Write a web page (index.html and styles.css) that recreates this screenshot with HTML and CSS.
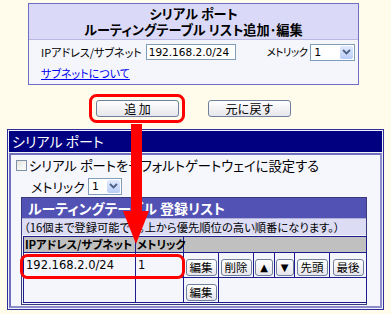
FILE: index.html
```html
<!DOCTYPE html>
<html lang="ja">
<head>
<meta charset="utf-8">
<link rel="stylesheet" href="styles.css">
</head>
<body>
<div class="page">
  <div class="topbox">
    <div class="tophead"><div class="tl">シリアル ポート</div><div class="tl">ルーティングテーブル リスト追加･編集</div></div>
    <div class="topbody">
      <div class="row">
        <span class="lbl">IPアドレス/サブネット</span>
        <span class="input">192.168.2.0/24</span>
        <span class="lbl metric">メトリック</span>
        <span class="sel"><span class="val">1</span><span class="arr"><svg width="9" height="6" viewBox="0 0 9 6"><path d="M1 1 L4.5 4.5 L8 1" fill="none" stroke="#4d6185" stroke-width="1.8"/></svg></span></span>
      </div>
      <a class="link" href="#">サブネットについて</a>
    </div>
  </div>

  <div class="actions">
    <button class="btn">追 加</button>
    <button class="btn">元に戻す</button>
  </div>

  <div class="panel">
    <div class="panel-head">シリアル ポート</div>
    <div class="panel-body">
      <div class="chk"><span class="box"></span>シリアル ポートをデフォルトゲートウェイに設定する</div>
      <div class="metric-row">
        <span class="mlabel">メトリック</span>
        <span class="sel sel-b"><span class="val">1</span><span class="arr"><svg width="9" height="6" viewBox="0 0 9 6"><path d="M1 1 L4.5 4.5 L8 1" fill="none" stroke="#4d6185" stroke-width="1.8"/></svg></span></span>
      </div>
      <div class="listbox">
        <div class="list-title">ルーティングテーブル 登録リスト</div>
        <div class="list-note">（16個まで登録可能です。上から優先順位の高い順番になります。）</div>
        <table class="list">
          <colgroup>
            <col class="c-ip"><col class="c-met"><col class="c-b1"><col class="c-b2"><col class="c-b3"><col class="c-b4"><col class="c-b5"><col class="c-b6">
          </colgroup>
          <tr class="hdr">
            <th>IPアドレス/サブネット</th>
            <th>メトリック</th>
            <th colspan="6"></th>
          </tr>
          <tr class="r1">
            <td class="ip">192.168.2.0/24</td>
            <td class="met">1</td>
            <td><span class="sbtn">編集</span></td>
            <td><span class="sbtn">削除</span></td>
            <td><span class="sbtn tri">▲</span></td>
            <td><span class="sbtn tri">▼</span></td>
            <td><span class="sbtn">先頭</span></td>
            <td><span class="sbtn">最後</span></td>
          </tr>
          <tr class="r2">
            <td></td>
            <td></td>
            <td><span class="sbtn">編集</span></td>
            <td colspan="5"></td>
          </tr>
        </table>
      </div>
    </div>
  </div>

  <svg class="overlay" width="391" height="314" viewBox="0 0 391 314">
    <rect x="90.5" y="95.5" width="93" height="26" rx="6" ry="6" fill="none" stroke="#ff0000" stroke-width="3"/>
    <rect x="21.5" y="255.5" width="162" height="22" rx="6" ry="6" fill="none" stroke="#ff0000" stroke-width="3"/>
    <rect x="131" y="124" width="11" height="90" fill="#ff0000"/>
    <polygon points="123,211 149,211 136,244" fill="#ff0000"/>
  </svg>
</div>
</body>
</html>
```

FILE: styles.css
```css
html, body {
  margin: 0;
  padding: 0;
}
body {
  background: #fffcec;
  font-family: "Noto Sans CJK JP", "Noto Sans", sans-serif;
  font-feature-settings: "palt";
  color: #000;
}
.page {
  position: relative;
  width: 391px;
  height: 314px;
  overflow: hidden;
  padding-top: 3px;
  box-sizing: border-box;
}

/* top box */
.topbox {
  margin-left: 28px;
  width: 331px;
  border: 1px solid #6e6ec6;
  box-sizing: border-box;
}
.tophead {
  background: #dadaf8;
  height: 36px;
  box-sizing: border-box;
  padding-top: 2px;
  text-align: center;
  font-weight: bold;
  font-size: 13.2px;
  border-bottom: 1px solid #b8b8e0;
}
.tl {
  height: 16px;
  line-height: 16px;
}
.topbody {
  background: #f5f5fc;
  height: 44px;
  box-sizing: border-box;
  padding: 3px 0 0 12px;
  font-size: 11px;
}
.row {
  display: flex;
  align-items: center;
  height: 18px;
  white-space: nowrap;
}
.lbl {
  line-height: 16px;
  flex-shrink: 0;
  white-space: nowrap;
}
.input {
  flex-shrink: 0;
  margin-left: 4px;
  width: 90px;
  height: 16px;
  box-sizing: border-box;
  border: 1px solid #7f9db9;
  background: #fff;
  font-family: "DejaVu Sans", sans-serif;
  font-size: 10.5px;
  line-height: 14px;
  padding-left: 2px;
}
.metric {
  margin-left: 31px;
  font-size: 10.5px;
  letter-spacing: -0.6px;
}
.sel {
  display: inline-flex;
  flex-shrink: 0;
  margin-left: 3px;
  width: 45px;
  height: 17px;
  box-sizing: border-box;
  border: 1px solid #7f9db9;
  background: #fff;
}
.sel .val {
  flex: 1;
  font-family: "DejaVu Sans", sans-serif;
  font-size: 11px;
  line-height: 15px;
  padding-left: 3px;
}
.sel .arr {
  width: 13px;
  margin: 1px;
  border-radius: 2px;
  background: linear-gradient(#e2eafe, #b9cdf7);
  display: flex;
  align-items: center;
  justify-content: center;
}
.link {
  display: block;
  margin-top: 4px;
  color: #0000ee;
  text-decoration: underline;
  line-height: 16px;
  width: max-content;
}

/* buttons */
.actions {
  display: flex;
  gap: 29px;
  margin: 15px 0 0 96px;
}
.btn {
  width: 83px;
  height: 17px;
  padding: 0;
  border: 1px solid #6f7f9c;
  border-radius: 3px;
  background: linear-gradient(#ffffff, #e6e6ec);
  font-family: "Noto Sans CJK JP", sans-serif;
  font-size: 12px;
  line-height: 14px;
  color: #000;
}

/* panel */
.panel {
  margin: 12px 0 0 7px;
  width: 377px;
  box-sizing: border-box;
  border: 1px solid #2e2e9a;
  padding: 1px;
  background: #f0f0fa;
}
.panel-head {
  background: #000080;
  color: #fff;
  height: 21px;
  font-size: 14px;
  line-height: 21px;
  padding-left: 3px;
}
.panel-body {
  margin-top: 1px;
  border: 2px solid #8d8dcc;
  border-top-color: #7070bc;
  border-left-color: #7070bc;
  background: #f6f6fd;
  padding: 0 0 1px 3px;
}
.chk {
  display: flex;
  align-items: center;
  height: 20px;
  padding-left: 2px;
  font-size: 13.3px;
}
.box {
  width: 11px;
  height: 11px;
  box-sizing: border-box;
  border: 1px solid #8090a8;
  background: linear-gradient(135deg, #e4e4dc, #ffffff);
  margin-right: 2px;
}
.metric-row {
  display: flex;
  align-items: center;
  height: 22px;
  padding-left: 17px;
  font-size: 13px;
}
.mlabel {
  width: 54px;
}
.sel-b {
  margin-left: 3px;
  width: 34px;
}
.listbox {
  margin: 0 0 0 7px;
  width: 346px;
  box-sizing: border-box;
  border: 1px solid #3a3a7a;
  background: #f5f5fc;
}
.list-title {
  background: #5252b4;
  color: #fff;
  font-weight: bold;
  font-size: 14px;
  height: 20px;
  line-height: 20px;
  padding-left: 6px;
}
.list-note {
  background: #dcdcf4;
  font-size: 11.3px;
  height: 17px;
  line-height: 17px;
  padding-left: 2px;
  border-top: 1px solid #b0b0d8;
  box-sizing: border-box;
  white-space: nowrap;
}
.list {
  border-collapse: collapse;
  margin: 1px 0 1px 1px;
  width: 343px;
  table-layout: fixed;
}
.c-ip { width: 112px; }
.c-met { width: 48px; }
.c-b1 { width: 35px; }
.c-b2 { width: 35px; }
.c-b3 { width: 21px; }
.c-b4 { width: 20px; }
.c-b5 { width: 35px; }
.c-b6 { width: 37px; }
.list th, .list td {
  border: 1px solid #1c1c8c;
  padding: 0;
}
.list th {
  background: #c0c0c0;
  height: 15px;
  font-size: 11.4px;
  font-weight: bold;
  text-align: left;
  line-height: 15px;
  white-space: nowrap;
  padding-left: 1px;
  letter-spacing: -0.2px;
}
.r1 td {
  height: 23px;
  text-align: center;
}
.r2 td {
  height: 18px;
  text-align: center;
}
.list td.ip, .list td.met {
  text-align: left;
  font-family: "DejaVu Sans", sans-serif;
  font-size: 11.5px;
  padding-left: 2px;
}
.sbtn {
  display: inline-block;
  height: 17px;
  box-sizing: border-box;
  border: 1px solid #6f7f9c;
  border-radius: 3px;
  background: linear-gradient(#ffffff, #e6e6ec);
  font-size: 11.5px;
  line-height: 15px;
  padding: 0 3px;
  vertical-align: middle;
}
.sbtn.tri {
  width: 18px;
  font-size: 10px;
  padding: 0;
  font-family: "DejaVu Sans", sans-serif;
}

.overlay {
  position: absolute;
  left: 0;
  top: 0;
  pointer-events: none;
}
```
